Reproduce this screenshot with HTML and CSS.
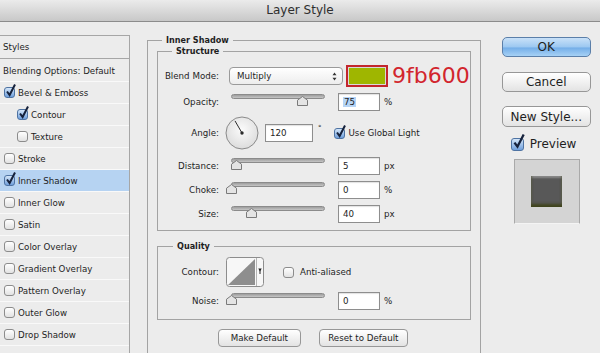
FILE: index.html
```html
<!DOCTYPE html>
<html lang="en">
<head>
    <meta charset="UTF-8">
    <meta name="viewport" content="width=device-width, initial-scale=1.0">
    <title>Layer Style</title>
    <link rel="stylesheet" href="styles.css">
</head>
<body>

    <div class="window">
        <div class="titlebar">Layer Style</div>

        <div class="main">
            <ul class="styles">
                <li class="head">Styles</li>
                <li class="plain">Blending Options: Default</li>
                <li><span class="cb on"><svg viewBox="0 0 11 13"><path d="M2 7.5l2.6 3.5 5.4-10.5"/></svg></span>Bevel &amp; Emboss</li>
                <li class="sub"><span class="cb on"><svg viewBox="0 0 11 13"><path d="M2 7.5l2.6 3.5 5.4-10.5"/></svg></span>Contour</li>
                <li class="sub"><span class="cb"></span>Texture</li>
                <li><span class="cb"></span>Stroke</li>
                <li class="active"><span class="cb on"><svg viewBox="0 0 11 13"><path d="M2 7.5l2.6 3.5 5.4-10.5"/></svg></span>Inner Shadow</li>
                <li><span class="cb"></span>Inner Glow</li>
                <li><span class="cb"></span>Satin</li>
                <li><span class="cb"></span>Color Overlay</li>
                <li><span class="cb"></span>Gradient Overlay</li>
                <li><span class="cb"></span>Pattern Overlay</li>
                <li><span class="cb"></span>Outer Glow</li>
                <li><span class="cb"></span>Drop Shadow</li>
                <li></li>
            </ul>

            <fieldset class="group outer">
                <legend>Inner Shadow</legend>

                <fieldset class="group structure">
                    <legend>Structure</legend>

                    <div class="row blend">
                        <label>Blend Mode:</label>
                        <div class="select">
                            <span>Multiply</span>
                            <svg width="5" height="9" viewBox="0 0 5 9"><path d="M2.5 0.5L4.5 3.2H0.5Z M2.5 8.5L4.5 5.8H0.5Z" fill="#333"/></svg>
                        </div>
                        <span class="swatch"></span>
                        <span class="hex">9fb600</span>
                    </div>

                    <div class="row opacity">
                        <label>Opacity:</label>
                        <div class="slider">
                            <div class="track"></div>
                            <svg class="thumb" style="left:66px" viewBox="0 0 11 10"><path d="M5.5 0.5L10.5 4.2V9.5H0.5V4.2Z"/></svg>
                        </div>
                        <div class="field"><span class="sel">75</span></div>
                        <span class="unit">%</span>
                    </div>

                    <div class="row angle">
                        <label>Angle:</label>
                        <svg class="dial" width="34" height="34" viewBox="0 0 34 34">
                            <defs>
                                <radialGradient id="dialFill" cx="50%" cy="40%" r="60%">
                                    <stop offset="0" stop-color="#fbfbfb"/>
                                    <stop offset="1" stop-color="#dcdcdc"/>
                                </radialGradient>
                            </defs>
                            <circle cx="17" cy="17" r="16" fill="url(#dialFill)" stroke="#8a8a8a"/>
                            <line x1="17" y1="17" x2="10" y2="4.9" stroke="#2c2c2c" stroke-width="1"/>
                            <circle cx="17" cy="17" r="1.7" fill="#2c2c2c"/>
                        </svg>
                        <div class="field wide">120</div>
                        <span class="deg">°</span>
                        <span class="cb on"><svg viewBox="0 0 11 13"><path d="M2 7.5l2.6 3.5 5.4-10.5"/></svg></span>
                        <span class="cb-label">Use Global Light</span>
                    </div>

                    <div class="row distance">
                        <label>Distance:</label>
                        <div class="slider">
                            <div class="track"></div>
                            <svg class="thumb" style="left:0px" viewBox="0 0 11 10"><path d="M5.5 0.5L10.5 4.2V9.5H0.5V4.2Z"/></svg>
                        </div>
                        <div class="field">5</div>
                        <span class="unit">px</span>
                    </div>

                    <div class="row choke">
                        <label>Choke:</label>
                        <div class="slider">
                            <div class="track"></div>
                            <svg class="thumb" style="left:-5px" viewBox="0 0 11 10"><path d="M5.5 0.5L10.5 4.2V9.5H0.5V4.2Z"/></svg>
                        </div>
                        <div class="field">0</div>
                        <span class="unit">%</span>
                    </div>

                    <div class="row size">
                        <label>Size:</label>
                        <div class="slider">
                            <div class="track"></div>
                            <svg class="thumb" style="left:15px" viewBox="0 0 11 10"><path d="M5.5 0.5L10.5 4.2V9.5H0.5V4.2Z"/></svg>
                        </div>
                        <div class="field">40</div>
                        <span class="unit">px</span>
                    </div>
                </fieldset>

                <fieldset class="group quality">
                    <legend>Quality</legend>

                    <div class="row contour-row">
                        <label>Contour:</label>
                        <svg class="contour" width="38" height="30" viewBox="0 0 38 30">
                            <rect x="0.5" y="0.5" width="37" height="29" rx="3" fill="#f7f7f7" stroke="#8d8d8d"/>
                            <path d="M2 28L29 2V28Z" fill="#8e8e8e"/>
                            <line x1="30.5" y1="1" x2="30.5" y2="29" stroke="#b4b4b4"/>
                            <path d="M32.3 11.5H35.7L34 14.5Z" fill="#222"/>
                            <line x1="34" y1="13" x2="34" y2="17" stroke="#222" stroke-width="1"/>
                        </svg>
                        <span class="cb aa"></span>
                        <span class="cb-label aa-label">Anti-aliased</span>
                    </div>

                    <div class="row noise">
                        <label>Noise:</label>
                        <div class="slider">
                            <div class="track"></div>
                            <svg class="thumb" style="left:-5px" viewBox="0 0 11 10"><path d="M5.5 0.5L10.5 4.2V9.5H0.5V4.2Z"/></svg>
                        </div>
                        <div class="field">0</div>
                        <span class="unit">%</span>
                    </div>
                </fieldset>

                <div class="defaults">
                    <button class="make">Make Default</button>
                    <button class="reset">Reset to Default</button>
                </div>
            </fieldset>

            <div class="actions">
                <button class="ok">OK</button>
                <button>Cancel</button>
                <button>New Style...</button>
                <div class="preview-toggle">
                    <span class="cb on big"><svg viewBox="0 0 11 13"><path d="M2 7.5l2.6 3.5 5.4-10.5"/></svg></span>
                    <span>Preview</span>
                </div>
                <div class="preview-box"><span class="sample"></span></div>
            </div>
        </div>
    </div>

</body>
</html>
```

FILE: styles.css
```css
*{
    margin: 0;
    padding: 0;
    box-sizing: border-box;
}
body{
    background: #fff;
    font-family: "DejaVu Sans", sans-serif;
    font-size: 8.7px;
    color: #1e1e1e;
}
.window{
    width: 600px;
    height: 353px;
    background: #ececec;
    overflow: hidden;
}
.titlebar{
    height: 22px;
    line-height: 21px;
    text-align: center;
    font-size: 12px;
    color: #2e2e2e;
    background: linear-gradient(#ebebeb, #c8c8c8);
    border-bottom: 1px solid #8c8c8c;
}
.main{
    display: flex;
    align-items: flex-start;
}

/* left list */
.styles{
    list-style: none;
    width: 130px;
    margin-top: 13px;
    border-top: 1px solid #a6a6a6;
    border-right: 1px solid #a6a6a6;
}
.styles li{
    height: 22px;
    display: flex;
    align-items: center;
    gap: 3px;
    padding-left: 4px;
    border-bottom: 1px solid #f9f9f9;
}
.styles li.head{
    height: 23px;
    padding-left: 3px;
    border-bottom: 1px solid #a6a6a6;
    margin-bottom: 1px;
}
.styles li.plain{
    padding-left: 3px;
}
.styles li.sub{
    padding-left: 17px;
}
.styles li.active{
    background: #b6d3f2;
}

/* checkboxes */
.cb{
    position: relative;
    display: inline-block;
    flex: none;
    width: 11px;
    height: 11px;
    border: 1px solid #8c8c8c;
    border-radius: 3px;
    background: linear-gradient(#ffffff, #e2e2e2);
}
.cb.on{
    border-color: #4e73a3;
    background: linear-gradient(#d4e6f9, #6f9fdc);
}
.cb svg{
    position: absolute;
    left: 0;
    top: -4px;
    width: 11px;
    height: 13px;
    overflow: visible;
}
.cb svg path{
    fill: none;
    stroke: #16223c;
    stroke-width: 2;
}
.cb.big{
    width: 13px;
    height: 13px;
}
.cb.big svg{
    width: 13px;
    height: 15px;
    top: -5px;
}

/* group boxes */
.group{
    border: 1px solid #a3a3a3;
}
.group legend{
    font-weight: bold;
    font-size: 8.1px;
    line-height: 11px;
    padding: 0 4px;
}
.outer{
    width: 326px;
    height: 330px;
    margin: 13px 0 0 17px;
    padding: 0 9px;
}
.outer > legend{
    margin-left: 5px;
}
.structure{
    padding: 0 0 6px;
}
.structure > legend{
    margin-left: 14px;
}
.quality{
    margin-top: 10px;
    padding: 0 0 8px;
}
.quality > legend{
    margin-left: 15px;
}

/* rows */
.row{
    display: flex;
    align-items: center;
    height: 20px;
}
.row label{
    width: 61px;
    flex: none;
    text-align: right;
}
.row.blend{
    height: 22px;
    margin-top: 8px;
}
.row.opacity{
    margin-top: 5px;
}
.row.angle{
    height: 34px;
    margin-top: 4px;
}
.row.distance{
    margin-top: 6px;
}
.row.choke,
.row.size{
    margin-top: 4px;
}
.row.contour-row{
    height: 30px;
    margin-top: 5px;
}
.row.noise{
    margin-top: 4px;
}

.select{
    margin-left: 10px;
    width: 114px;
    height: 18px;
    border: 1px solid #9a9a9a;
    border-radius: 4px;
    background: linear-gradient(#ffffff, #ededed);
    display: flex;
    align-items: center;
    justify-content: space-between;
    padding: 0 5px 0 7px;
}
.swatch{
    margin-left: 3px;
    width: 42px;
    height: 22px;
    border: 2px solid #c3262d;
    background: #9fb600;
    box-shadow: inset 0 0 0 1px #d9d9d9;
}
.hex{
    margin-left: 4px;
    font-size: 22px;
    line-height: 22px;
    color: #d2252d;
}

.slider{
    position: relative;
    margin-left: 12px;
    width: 94px;
    height: 12px;
    margin-bottom: 4px;
}
.track{
    height: 5px;
    border: 1px solid #8b8b8b;
    border-radius: 3px;
    background: linear-gradient(#9d9d9d, #c6c6c6);
}
.thumb{
    position: absolute;
    top: 2px;
    width: 11px;
    height: 10px;
}
.thumb path{
    fill: #e4e4e4;
    stroke: #7a7a7a;
}

.field{
    margin-left: 13px;
    width: 42px;
    height: 18px;
    border: 1px solid #8e8e8e;
    background: #fff;
    padding-left: 4px;
    line-height: 16px;
    box-shadow: inset 0 1px 1px rgba(0, 0, 0, 0.12);
}
.field.wide{
    margin-left: 6px;
    width: 48px;
}
.sel{
    background: #b5d4f6;
    padding: 0 1px;
}
.unit{
    margin-left: 4px;
}
.dial{
    margin-left: 6px;
    flex: none;
}
.deg{
    margin-left: 5px;
    align-self: flex-start;
    margin-top: 8px;
    font-size: 7px;
}
.angle .cb{
    margin-left: 12px;
}
.cb-label{
    margin-left: 4px;
}
.contour{
    margin-left: 7px;
    flex: none;
}
.cb.aa{
    margin-left: 19px;
}
.aa-label{
    margin-left: 6px;
}

/* buttons */
button{
    font: inherit;
    color: #1e1e1e;
    border: 1px solid #979797;
    border-radius: 4px;
    background: linear-gradient(#ffffff, #f1f1f1 50%, #e3e3e3);
    cursor: pointer;
}
.defaults{
    display: flex;
    justify-content: center;
    gap: 18px;
    margin-top: 9px;
    padding-right: 2px;
}
.defaults button{
    height: 18px;
}
.defaults .make{
    width: 83px;
}
.defaults .reset{
    width: 89px;
}

/* right column */
.actions{
    display: flex;
    flex-direction: column;
    width: 89px;
    margin: 15px 0 0 21px;
}
.actions button{
    height: 20px;
    font-size: 12px;
    border-radius: 5px;
    margin-top: 15px;
}
.actions button:first-child{
    margin-top: 0;
}
.actions button:nth-child(3){
    margin-top: 14px;
    height: 21px;
}
.actions .ok{
    border-color: #5b7fa9;
    background: linear-gradient(#c9e1f8, #9cc8f1 50%, #74aee8 55%, #a6d1f5);
}
.preview-toggle{
    display: flex;
    align-items: center;
    gap: 6px;
    height: 14px;
    margin-top: 10px;
    padding-left: 9px;
    font-size: 12px;
}
.preview-box{
    width: 66px;
    height: 65px;
    margin: 8px 0 0 12px;
    background: #d4d4d4;
    border: 1px solid #a9a9a9;
    border-bottom-color: #f4f4f4;
    display: flex;
    align-items: center;
    justify-content: center;
}
.sample{
    width: 31px;
    height: 31px;
    background: #585858;
    box-shadow: inset 0 -3px 3px rgba(62, 66, 24, 0.95), inset 0 2px 2px rgba(170, 170, 170, 0.6);
}
```
